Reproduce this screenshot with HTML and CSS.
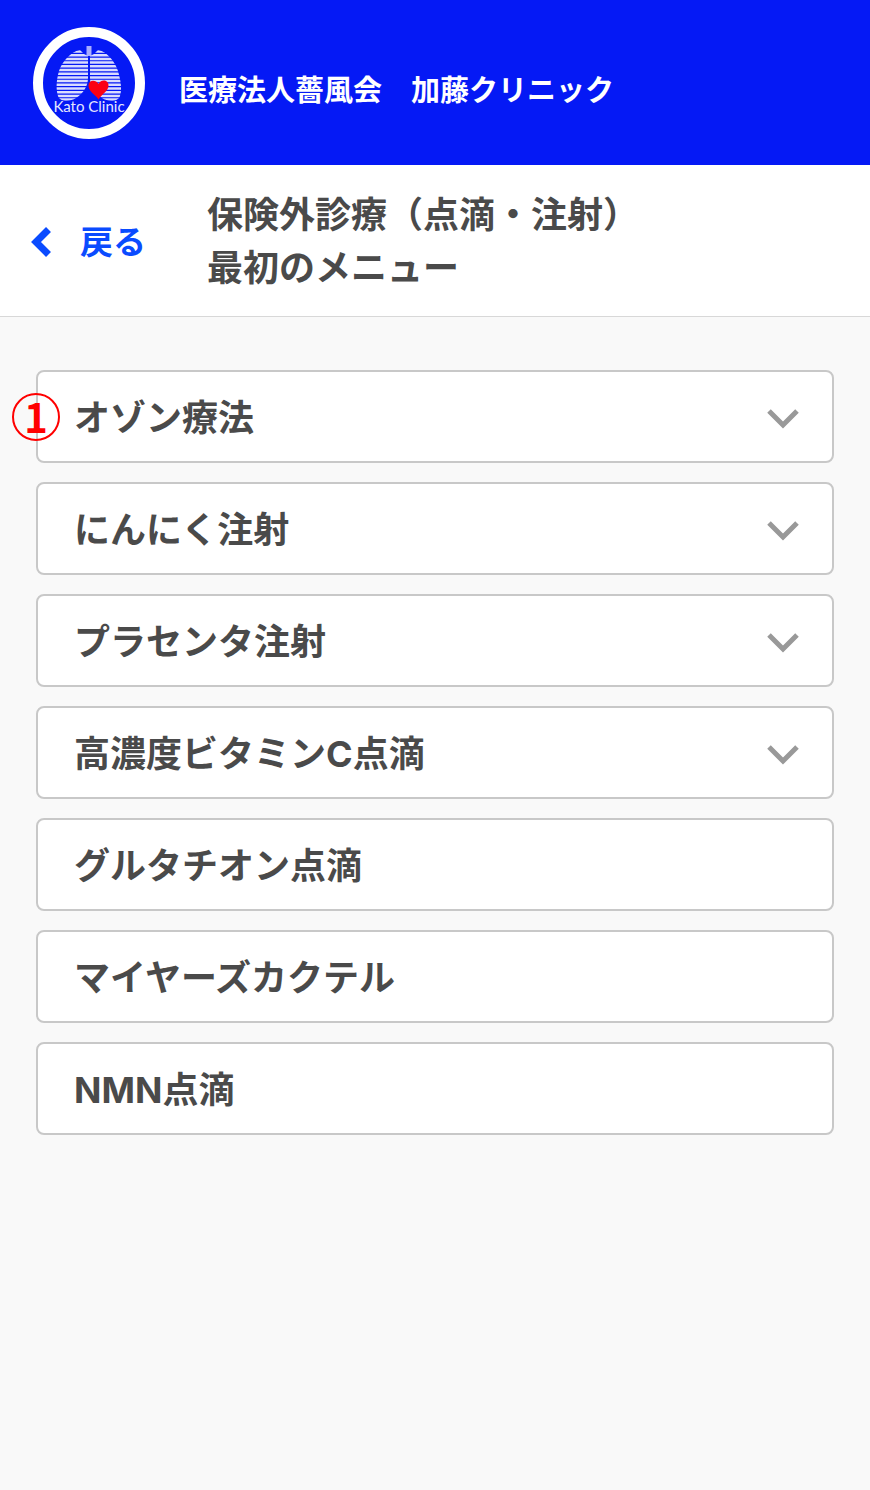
FILE: index.html
```html
<!DOCTYPE html>
<html lang="ja">
<head>
    <meta charset="UTF-8">
    <meta name="viewport" content="width=device-width, initial-scale=1.0">
    <title>医療法人薔風会 加藤クリニック</title>
    <link rel="stylesheet" href="styles.css">
</head>
<body>

    <header class="header">
        <svg class="header__logo" viewBox="0 0 112 112" role="img" aria-label="Kato Clinic">
            <defs>
                <clipPath id="lungs">
                    <path d="M47 23 C37 25 29 35 26 44 C23 54 23 63 25 69 C27 75 37 75 43 71 C50 67 55 59 55 51 L55 29 L51 27 Z"/>
                    <path d="M65 23 C75 25 82 35 85 44 C88 54 89 63 87 69 C85 75 75 75 69 71 C62 67 57 59 57 51 L57 29 L61 27 Z"/>
                </clipPath>
            </defs>
            <circle cx="56" cy="56" r="51" fill="none" stroke="#fff" stroke-width="10"/>
            <path d="M53.500 19h5v10h-5z" fill="#a9adff"/>
            <g clip-path="url(#lungs)" stroke="#d9dcff" stroke-width="2.5">
                <path d="M20 24.5H92 M20 28.2H92 M20 31.9H92 M20 35.6H92 M20 39.3H92 M20 43H92 M20 46.7H92 M20 50.4H92 M20 54.1H92 M20 57.8H92 M20 61.5H92 M20 65.2H92 M20 68.9H92 M20 72.6H92"/>
            </g>
            <path d="M65.500 72.500 C63 68 55.500 65 55.500 58.500 C55.500 53 62.500 52 65.500 57 C68.500 51.500 75.500 53 75.500 58.500 C75.500 64 69 67 65.500 72.500 Z" fill="#fb0012"/>
            <text class="header__logo-text" x="56" y="85" text-anchor="middle">Kato Clinic</text>
        </svg>
        <p class="header__name">医療法人薔風会　加藤クリニック</p>
    </header>

    <div class="titlebar">
        <a class="titlebar__back" href="#">
            <svg class="titlebar__arrow" viewBox="0 0 22 32" aria-hidden="true">
                <path d="M18.500 3.500 L6 16 L18.500 28.500" fill="none" stroke="#0a4bff" stroke-width="7"/>
            </svg>
            戻る
        </a>
        <h1 class="titlebar__title">保険外診療（点滴・注射）<br>最初のメニュー</h1>
    </div>

    <main class="content">
        <ul class="menu">
            <li class="menu__row">
                <span class="menu__marker">1</span>
                <button class="menu__item" type="button" aria-expanded="false">
                    オゾン療法
                    <svg class="menu__chevron" viewBox="0 0 32 20" aria-hidden="true"><path d="M2 2 L16 16 L30 2"/></svg>
                </button>
            </li>
            <li class="menu__row">
                <button class="menu__item" type="button" aria-expanded="false">
                    にんにく注射
                    <svg class="menu__chevron" viewBox="0 0 32 20" aria-hidden="true"><path d="M2 2 L16 16 L30 2"/></svg>
                </button>
            </li>
            <li class="menu__row">
                <button class="menu__item" type="button" aria-expanded="false">
                    プラセンタ注射
                    <svg class="menu__chevron" viewBox="0 0 32 20" aria-hidden="true"><path d="M2 2 L16 16 L30 2"/></svg>
                </button>
            </li>
            <li class="menu__row">
                <button class="menu__item" type="button" aria-expanded="false">
                    高濃度ビタミンC点滴
                    <svg class="menu__chevron" viewBox="0 0 32 20" aria-hidden="true"><path d="M2 2 L16 16 L30 2"/></svg>
                </button>
            </li>
            <li class="menu__row">
                <a class="menu__item" href="#">グルタチオン点滴</a>
            </li>
            <li class="menu__row">
                <a class="menu__item" href="#">マイヤーズカクテル</a>
            </li>
            <li class="menu__row">
                <a class="menu__item" href="#">NMN点滴</a>
            </li>
        </ul>
    </main>

</body>
</html>
```

FILE: styles.css
```css
* {
    box-sizing: border-box;
}

body {
    margin: 0;
    background: #f9f9f9;
    color: #4a4a4a;
    font-family: Inter, "Noto Sans CJK JP", sans-serif;
    font-weight: bold;
}

.header {
    display: flex;
    align-items: center;
    gap: 34px;
    padding: 27px 33px 26px;
    background: #0519f5;
    color: #fff;
}

.header__logo {
    flex: none;
    width: 112px;
    height: 112px;
}

.header__logo-text {
    fill: #e4e6ff;
    font-family: Lato, sans-serif;
    font-size: 15px;
    font-weight: normal;
}

.header__name {
    margin: 16px 0 0;
    font-size: 29px;
    line-height: 40px;
}

.titlebar {
    display: flex;
    align-items: center;
    gap: 61px;
    padding: 24px 30px 21px;
    background: #fff;
    border-bottom: 1px solid #d8d8d8;
}

.titlebar__back {
    display: flex;
    flex: none;
    align-items: center;
    gap: 28px;
    color: #0a4bff;
    font-size: 33px;
    line-height: 48px;
    text-decoration: none;
}

.titlebar__arrow {
    width: 22px;
    height: 32px;
}

.titlebar__title {
    margin: 0;
    font-size: 36px;
    line-height: 53px;
}

.content {
    padding: 53px 36px;
}

.menu {
    display: flex;
    flex-direction: column;
    gap: 19px;
    margin: 0;
    padding: 0;
    list-style: none;
}

.menu__row {
    position: relative;
}

.menu__item {
    display: flex;
    justify-content: space-between;
    align-items: center;
    width: 100%;
    padding: 20px 33px 16px 36px;
    background: #fff;
    border: 2px solid #c8c8c8;
    border-radius: 8px;
    color: inherit;
    font: inherit;
    font-size: 36px;
    line-height: 53px;
    text-align: left;
    text-decoration: none;
}

.menu__chevron {
    flex: none;
    width: 32px;
    height: 20px;
    fill: none;
    stroke: #999;
    stroke-width: 5px;
}

/* número por cima da borda do item */
.menu__marker {
    position: absolute;
    top: 50%;
    left: 0;
    width: 48px;
    height: 48px;
    border: 2px solid #f00;
    border-radius: 50%;
    color: #f00;
    font-family: "Noto Sans CJK JP", sans-serif;
    font-size: 40px;
    line-height: 42px;
    text-align: center;
    transform: translate(-50%, -50%);
}
```
